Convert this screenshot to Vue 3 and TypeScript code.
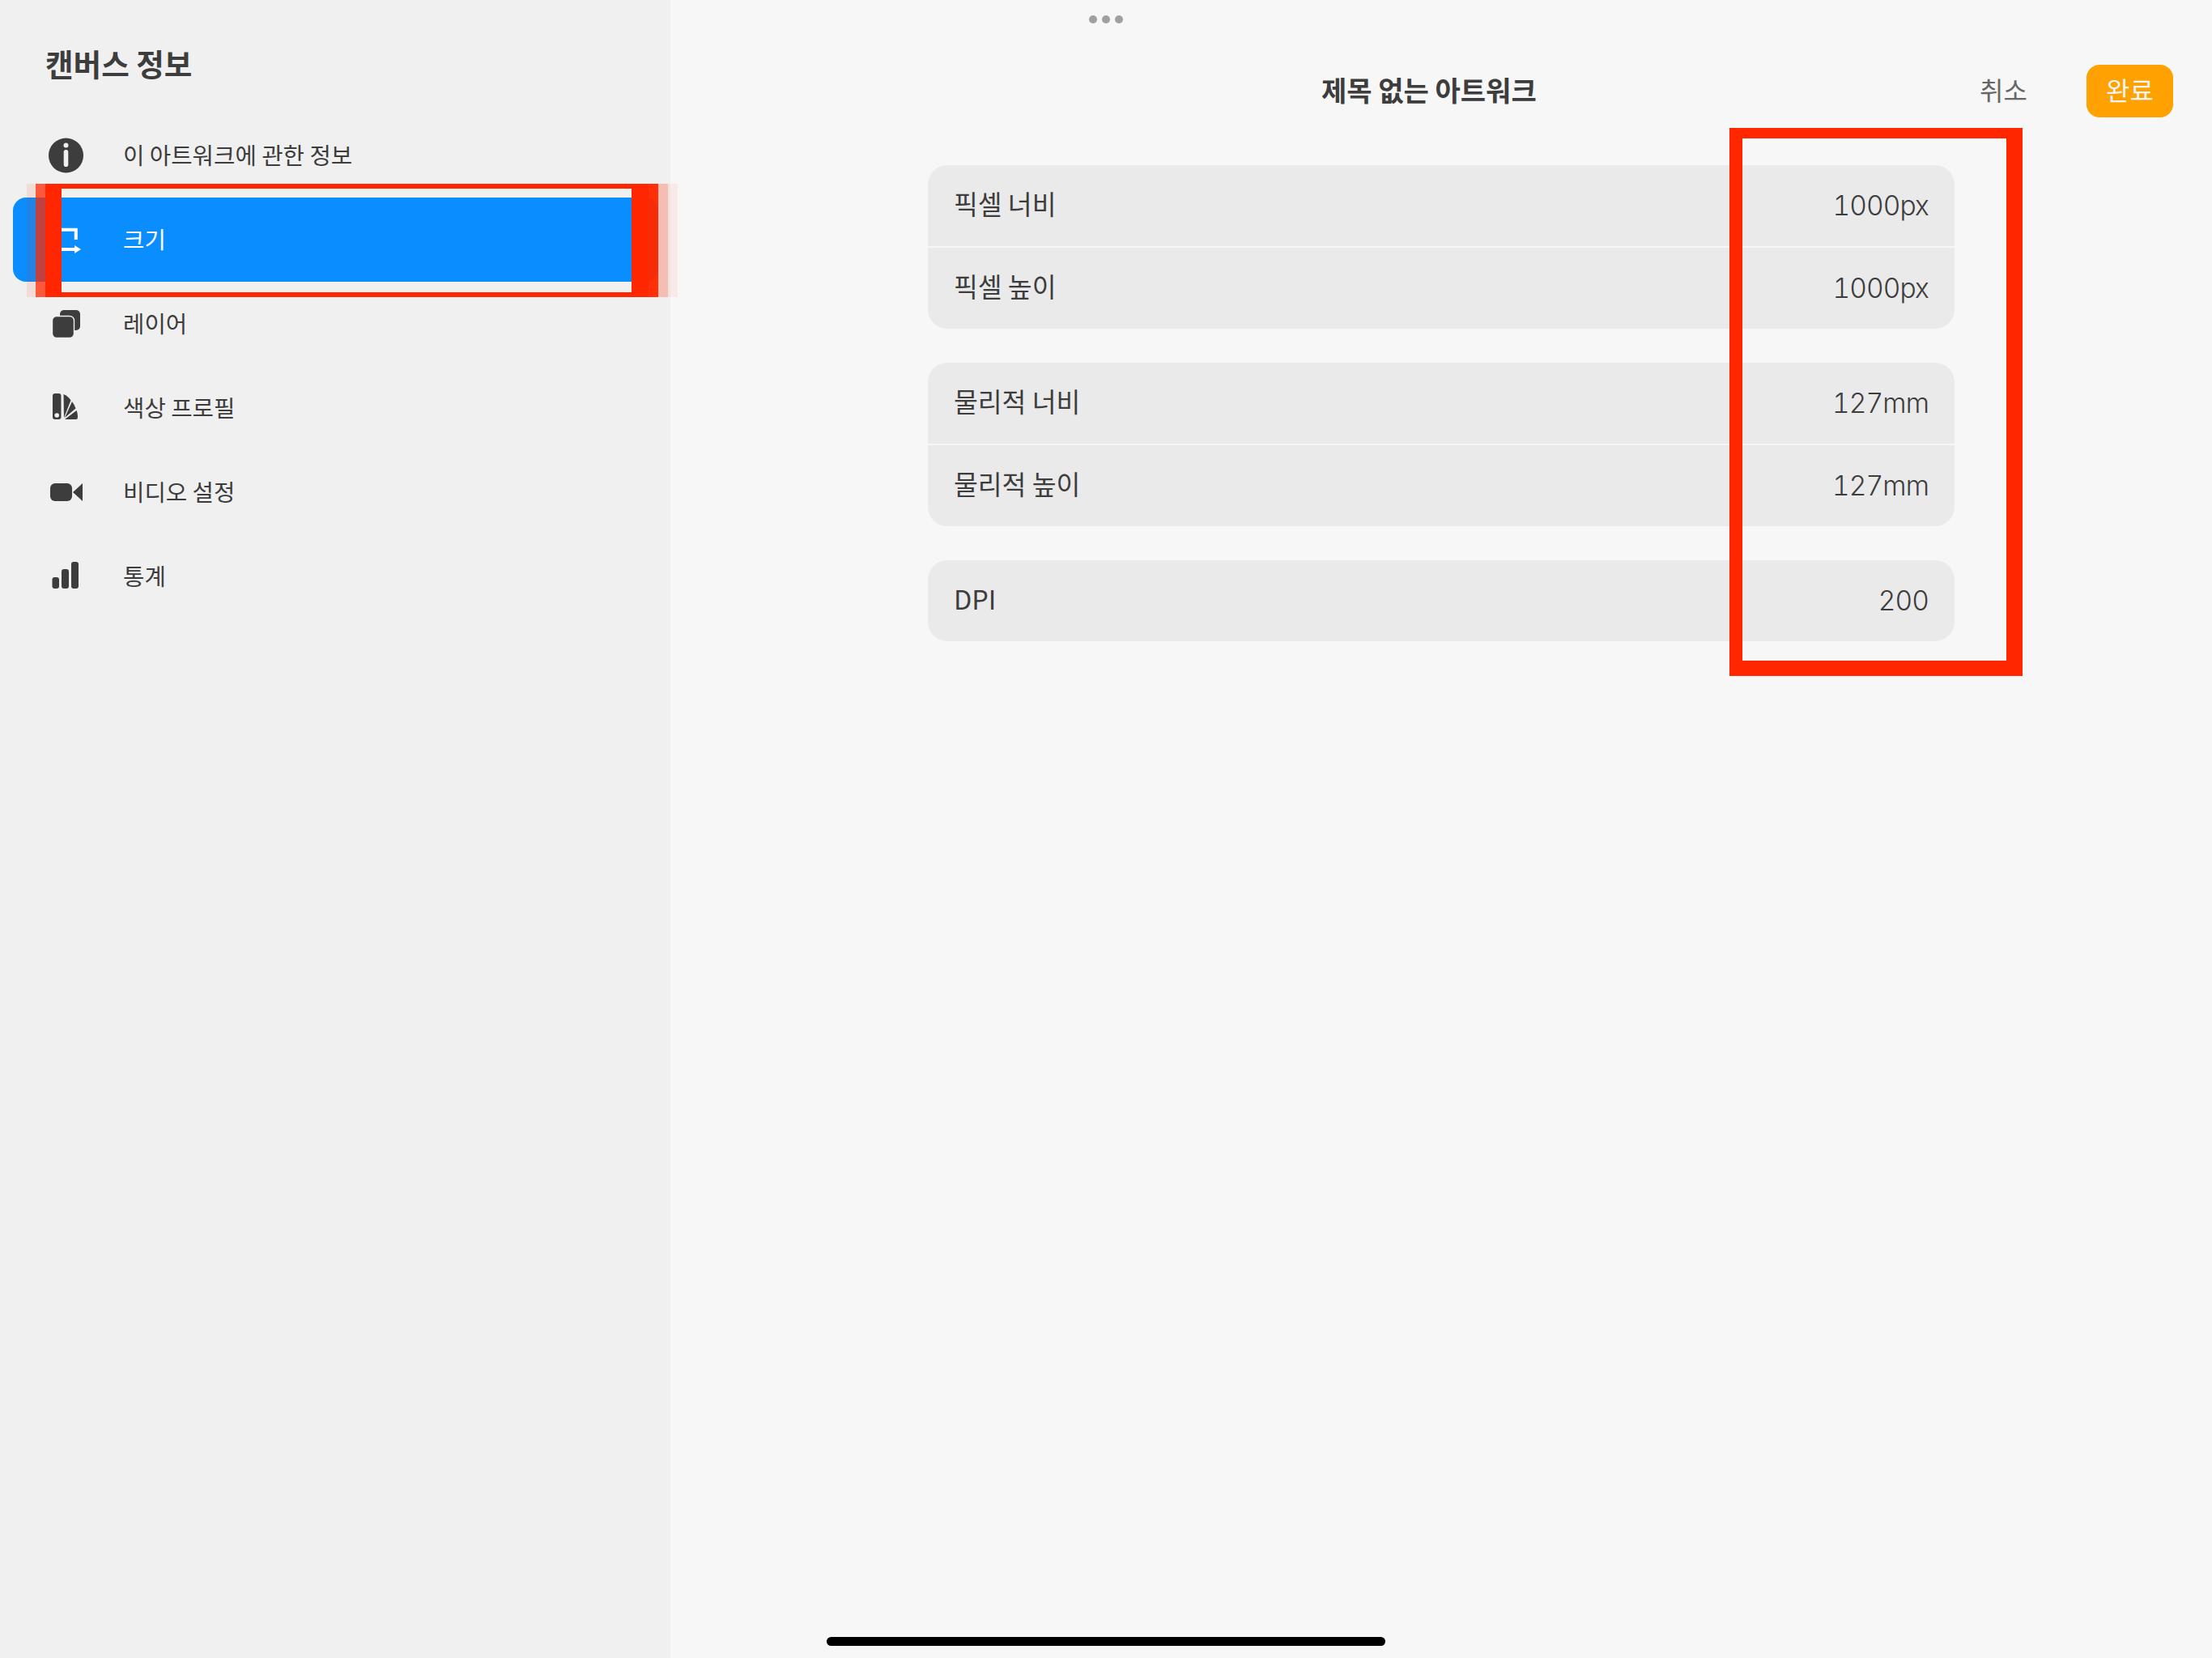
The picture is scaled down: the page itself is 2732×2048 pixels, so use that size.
<script setup lang="ts">
interface Row { label: string; value: string }
const groups: Row[][] = [
  [{ label: '픽셀 너비', value: '1000px' }, { label: '픽셀 높이', value: '1000px' }],
  [{ label: '물리적 너비', value: '127mm' }, { label: '물리적 높이', value: '127mm' }],
  [{ label: 'DPI', value: '200' }],
]
</script>

<template>
  <div class="page">
    <aside class="sidebar">
      <h1 class="side-title">캔버스 정보</h1>
      <nav class="menu">
        <div class="item">
          <svg class="ico" viewBox="0 0 48 48">
            <circle cx="25.5" cy="24" r="21.5" fill="#3d3d3d" />
            <circle cx="25.5" cy="11.5" r="3" fill="#f0f0f0" />
            <rect x="22.7" y="17" width="5.6" height="21" rx="2.8" fill="#f0f0f0" />
          </svg>
          <span>이 아트워크에 관한 정보</span>
        </div>
        <div class="item active">
          <svg class="ico" viewBox="0 0 48 48">
            <path d="M10 11.7H37.8V24" fill="none" stroke="#fff" stroke-width="4" />
            <path d="M10 36H37" fill="none" stroke="#fff" stroke-width="4" />
            <path d="M36 31L44 36L36 41Z" fill="#fff" />
          </svg>
          <span>크기</span>
        </div>
        <div class="item">
          <svg class="ico" viewBox="0 0 48 48">
            <rect x="18" y="7" width="25" height="25" rx="5" fill="#3d3d3d" />
            <rect x="8.5" y="14.5" width="27" height="27" rx="5.5" fill="#3d3d3d" stroke="#f0f0f0" stroke-width="1.4" />
          </svg>
          <span>레이어</span>
        </div>
        <div class="item">
          <svg class="ico" viewBox="0 0 48 48">
            <rect x="9" y="6" width="10.5" height="32" rx="3" fill="#3d3d3d" />
            <circle cx="14.2" cy="33" r="2.8" fill="#f0f0f0" />
            <path d="M22.5 7Q28 9 31.5 14.5L23 36Z" fill="#3d3d3d" />
            <path d="M33 16Q36 20 37.5 24.5L24 36Z" fill="#3d3d3d" />
            <path d="M38.5 27Q40 30 40 35Q40 38 38 38L24 38Z" fill="#3d3d3d" />
          </svg>
          <span>색상 프로필</span>
        </div>
        <div class="item">
          <svg class="ico" viewBox="0 0 48 48">
            <rect x="6" y="13" width="27" height="22" rx="6" fill="#3d3d3d" />
            <path d="M34 24L46 13V35Z" fill="#3d3d3d" />
          </svg>
          <span>비디오 설정</span>
        </div>
        <div class="item">
          <svg class="ico" viewBox="0 0 48 48">
            <rect x="8.5" y="25" width="8.5" height="14" rx="3" fill="#3d3d3d" />
            <rect x="20" y="15" width="9" height="24" rx="3" fill="#3d3d3d" />
            <rect x="32" y="6" width="9" height="33" rx="3" fill="#3d3d3d" />
          </svg>
          <span>통계</span>
        </div>
      </nav>
    </aside>

    <main class="content">
      <header class="head">
        <h2 class="doc-title">제목 없는 아트워크</h2>
        <span class="cancel">취소</span>
        <span class="done">완료</span>
      </header>
      <section class="groups">
        <div v-for="(group, g) in groups" :key="g" class="card">
          <div v-for="row in group" :key="row.label" class="row">
            <span class="label">{{ row.label }}</span>
            <span class="value">{{ row.value }}</span>
          </div>
        </div>
      </section>
    </main>

    <div class="grabber"><i></i><i></i><i></i></div>
    <div class="home-bar"></div>

    <!-- red annotation marks drawn over the screenshot -->
    <div class="mark m-top"></div>
    <div class="mark m-bottom"></div>
    <div class="mark m-l1"></div>
    <div class="mark m-l2"></div>
    <div class="mark m-l3"></div>
    <div class="mark m-r1"></div>
    <div class="mark m-r2"></div>
    <div class="mark m-r3"></div>
    <div class="mark m-r4"></div>
    <div class="box-mark"></div>
  </div>
</template>

<style scoped>
.page {
  position: relative;
  display: flex;
  width: 2732px;
  height: 2048px;
  overflow: hidden;
  background: #f7f7f7;
  color: #3d3d3d;
  font-family: "Noto Sans CJK KR", "Noto Sans", sans-serif;
}
.sidebar {
  flex: 0 0 828px;
  background: #f0f0f0;
  padding-top: 54px;
  box-sizing: border-box;
}
.side-title {
  margin: 0 0 0 56px;
  font-size: 37.6px;
  line-height: 48px;
  font-weight: 700;
}
.menu {
  display: flex;
  flex-direction: column;
  margin: 38px 15px 0 16px;
}
.item {
  display: flex;
  align-items: center;
  gap: 48px;
  height: 104px;
  padding-left: 40px;
  border-radius: 16px;
  font-size: 28.7px;
  font-weight: 400;
}
.item span {
  margin-bottom: 4px;
}
.item.active {
  background: #0a8eff;
  color: #fff;
}
.ico {
  flex: none;
  width: 48px;
  height: 48px;
}
.content {
  flex: 1;
  min-width: 0;
  padding-top: 80px;
}
.head {
  display: flex;
  align-items: center;
  height: 65px;
  padding: 0 48px 0 804px;
}
.doc-title {
  margin: 0 0 4px;
  font-size: 34px;
  font-weight: 700;
  line-height: 61px;
}
.cancel {
  margin-left: auto;
  margin-bottom: 6px;
  font-size: 32px;
  font-weight: 400;
  color: #666;
}
.done {
  display: flex;
  align-items: center;
  justify-content: center;
  box-sizing: border-box;
  width: 107px;
  height: 65px;
  margin-left: 73px;
  padding-bottom: 5px;
  border-radius: 16px;
  background: #ffa100;
  color: #f5f5f5;
  font-size: 32px;
  font-weight: 400;
}
.groups {
  display: flex;
  flex-direction: column;
  gap: 42px;
  margin: 59px 318px 0;
}
.card {
  display: flex;
  flex-direction: column;
  gap: 2px;
  border-radius: 24px;
  overflow: hidden;
}
.row {
  display: flex;
  align-items: center;
  justify-content: space-between;
  height: 100px;
  padding: 0 32px 0 32px;
  background: #eaeaea;
}
.label {
  margin-bottom: 7px;
  font-size: 32.4px;
  font-weight: 400;
}
.value {
  font-family: Inter, "Noto Sans", sans-serif;
  font-size: 33.5px;
  font-weight: 350;
  letter-spacing: -0.9px;
  font-feature-settings: "tnum";
}
.grabber {
  position: absolute;
  top: 19px;
  left: 1345px;
  display: flex;
  gap: 6px;
}
.grabber i {
  display: block;
  width: 10px;
  height: 10px;
  border-radius: 50%;
  background: #a0a0a0;
}
.home-bar {
  position: absolute;
  left: 1021px;
  top: 2022px;
  width: 690px;
  height: 11px;
  border-radius: 6px;
  background: #000;
}
.mark {
  position: absolute;
  top: 227px;
  height: 140px;
}
.m-top { left: 56px; width: 745px; height: 6px; background: #ff2600; }
.m-bottom { left: 56px; top: 361px; width: 745px; height: 6px; background: #ff2600; }
.m-l1 { left: 33px; width: 11px; background: rgba(255, 38, 0, 0.1); }
.m-l2 { left: 44px; width: 12px; background: rgba(255, 38, 0, 0.75); }
.m-l3 { left: 56px; width: 20px; background: #ff2600; }
.m-r1 { left: 780px; width: 21px; background: #ff2600; }
.m-r2 { left: 801px; width: 12px; background: rgba(255, 38, 0, 0.96); }
.m-r3 { left: 813px; width: 12px; background: rgba(255, 38, 0, 0.25); }
.m-r4 { left: 825px; width: 12px; background: rgba(255, 38, 0, 0.06); }
.box-mark {
  position: absolute;
  left: 2136px;
  top: 158px;
  width: 362px;
  height: 677px;
  box-sizing: border-box;
  border-style: solid;
  border-color: #ff2600;
  border-width: 13px 20px 19px 16px;
}
</style>
